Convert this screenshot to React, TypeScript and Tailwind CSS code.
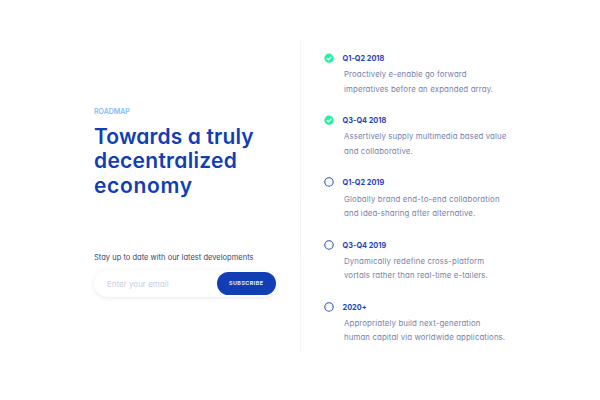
import React from "react";

type Line = { text: string; className: string };
type Milestone = { title: string; done: boolean; lines: Line[] };

const milestones: Milestone[] = [
  {
    title: "Q1-Q2 2018",
    done: true,
    lines: [
      { text: "Proactively e-enable go forward", className: "tracking-[0.1px]" },
      { text: "imperatives before an expanded array.", className: "tracking-[0.15px]" },
    ],
  },
  {
    title: "Q3-Q4 2018",
    done: true,
    lines: [
      { text: "Assertively supply multimedia based value", className: "tracking-[0.11px]" },
      { text: "and collaborative.", className: "tracking-[0.13px]" },
    ],
  },
  {
    title: "Q1-Q2 2019",
    done: false,
    lines: [
      { text: "Globally brand end-to-end collaboration", className: "tracking-[0.17px]" },
      { text: "and idea-sharing after alternative.", className: "tracking-[0.13px]" },
    ],
  },
  {
    title: "Q3-Q4 2019",
    done: false,
    lines: [
      { text: "Dynamically redefine cross-platform", className: "tracking-[0.14px]" },
      { text: "vortals rather than real-time e-tailers.", className: "tracking-[0.12px]" },
    ],
  },
  {
    title: "2020+",
    done: false,
    lines: [
      { text: "Appropriately build next-generation", className: "tracking-[0.14px]" },
      { text: "human capital via worldwide applications.", className: "tracking-[0.13px]" },
    ],
  },
];

function Marker({ done }: { done: boolean }) {
  return (
    <svg viewBox="0 0 10 10" className="size-[10px] shrink-0" fill="none">
      {done ? (
        <>
          <circle cx="5" cy="5.2" r="4.6" fill="#21f3a3" />
          <path d="M2.7 5.3 4.3 6.8 7.3 3.8" stroke="#fff" strokeWidth="1.3" />
        </>
      ) : (
        <circle cx="5" cy="5" r="4.2" stroke="#2f55c4" strokeWidth="1.1" />
      )}
    </svg>
  );
}

export default function App() {
  return (
    <main className="flex h-[400px] w-[600px] overflow-hidden bg-white pt-[41px] font-['Inter',sans-serif] whitespace-nowrap [font-feature-settings:'cv11']">
      <section className="w-[300px] shrink-0 pt-[65px] pl-[94px]">
        <p className="h-[12px] text-[7px] leading-[12px] font-semibold text-[#7dbdfb]">ROADMAP</p>
        <h1 className="mt-[6.5px] text-[21px] leading-[24.5px] font-semibold text-[#123eb4]">
          <span className="block tracking-[0.12px]">Towards a truly</span>
          <span className="block tracking-[0.28px]">decentralized</span>
          <span className="block tracking-[0.7px]">economy</span>
        </h1>
        <p className="mt-[53.5px] h-[12px] text-[7.5px] leading-[12px] tracking-[0.02px] text-[#3b4664]">
          Stay up to date with our latest developments
        </p>
        <form
          className="mt-[6.5px] flex h-[26.5px] w-[183px] items-start justify-between rounded-full bg-white pt-[2px] pr-[1px] pl-[13px] shadow-[0_1px_4px_rgba(20,30,70,0.10)]"
          onSubmit={(e) => e.preventDefault()}
        >
          <input
            type="email"
            placeholder="Enter your email"
            className="h-[23px] w-[90px] text-[8px] outline-none placeholder:text-[#c8cede]"
          />
          <button className="h-[22.5px] w-[59.5px] rounded-full bg-[#123eb4] pt-[0.5px] text-[5.4px] font-bold tracking-[0.45px] text-[#e4eafb]">
            SUBSCRIBE
          </button>
        </form>
      </section>
      <div className="h-[311px] w-px shrink-0 bg-[repeating-linear-gradient(to_bottom,#f2f2f2_0px,#f2f2f2_1.5px,#fafafa_1.5px,#fafafa_2.5px)]" />
      <ol className="pt-[11px] pl-[23px]">
        {milestones.map((m) => (
          <li key={m.title} className="h-[62.2px]">
            <div className="flex h-[12px] items-center gap-[8.6px]">
              <Marker done={m.done} />
              <h2 className="pt-[2px] text-[7.3px] leading-[12px] font-bold text-[#1e45b7]">{m.title}</h2>
            </div>
            <p className="pt-[3.3px] pl-[20px] text-[7.8px] leading-[14.3px] text-[#7783aa]">
              {m.lines.map((l) => (
                <span key={l.text} className={`block ${l.className}`}>
                  {l.text}
                </span>
              ))}
            </p>
          </li>
        ))}
      </ol>
    </main>
  );
}
